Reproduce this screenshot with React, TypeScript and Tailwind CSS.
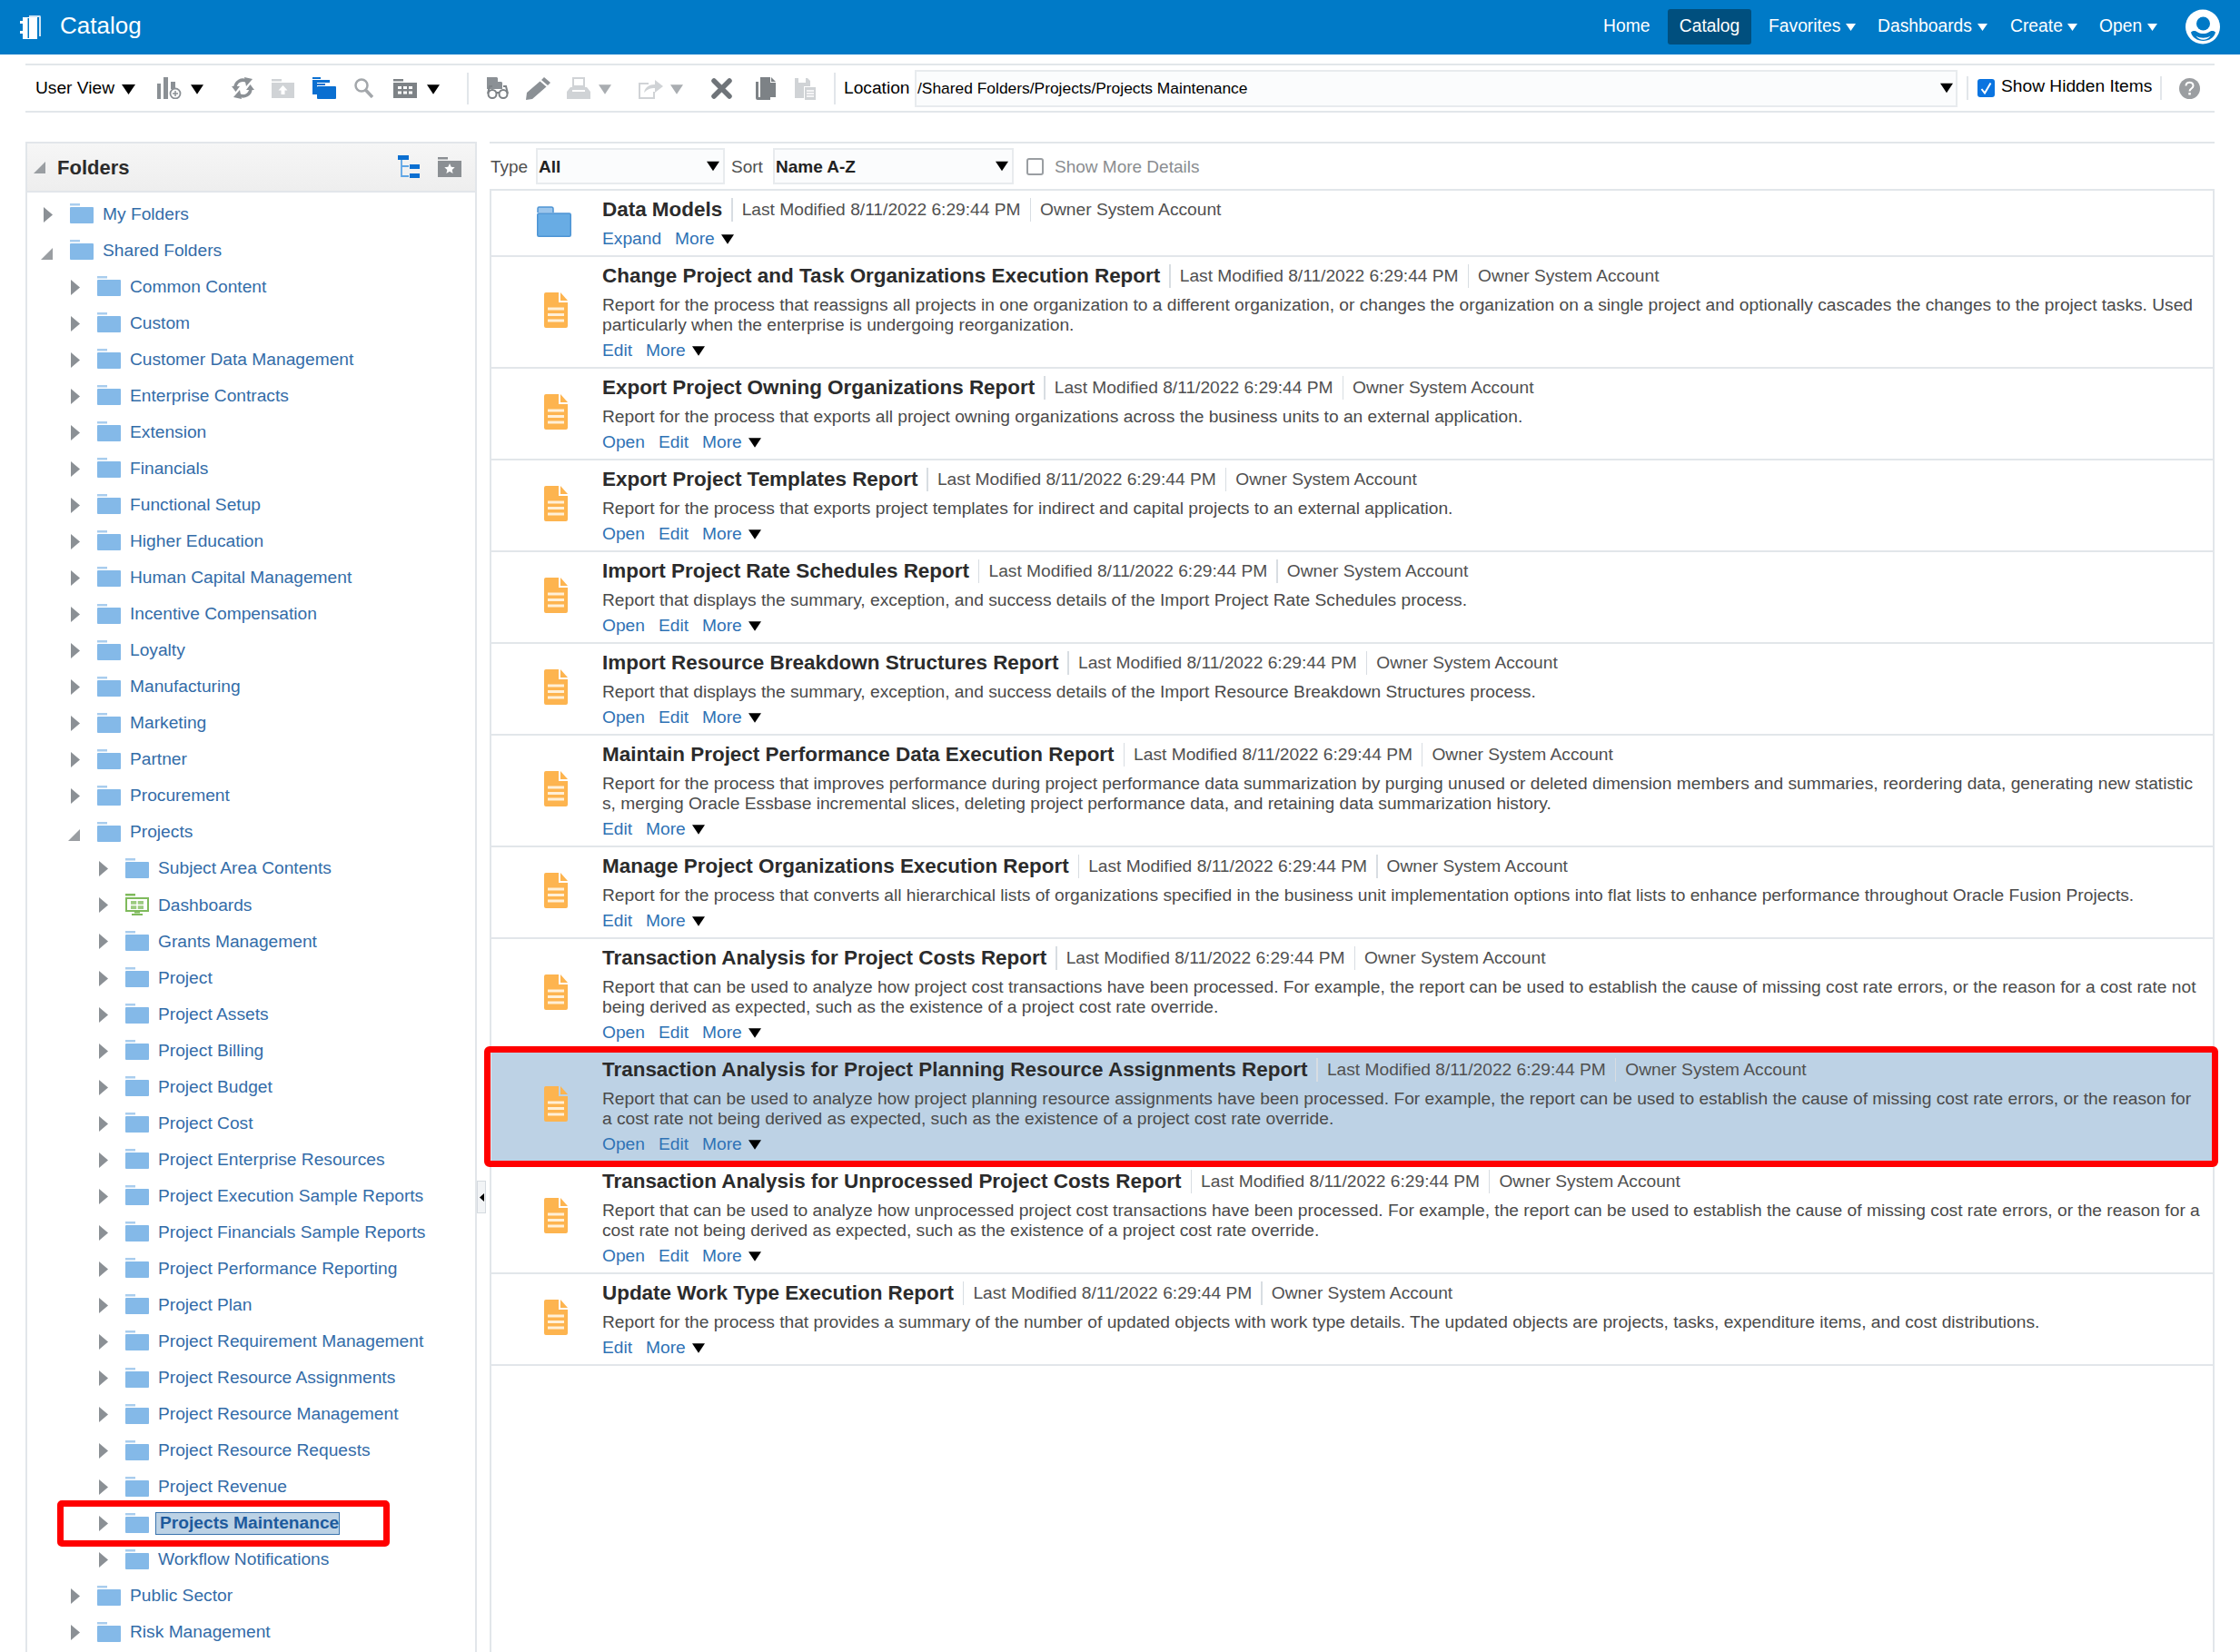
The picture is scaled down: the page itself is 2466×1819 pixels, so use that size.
import { Fragment } from "react";

const G = "#8b9095";
const L = "#d0d3d6";

function Caret({ className = "fill-black", w = 15, h = 11 }: { className?: string; w?: number; h?: number }) {
  return (
    <svg width={w} height={h} viewBox="0 0 15 11" className={`shrink-0 ${className}`}>
      <path d="M0 0h15L7.5 11z" />
    </svg>
  );
}

function TreeFolder() {
  return (
    <svg width="26" height="22" viewBox="0 0 26 22" className="-mt-[2px] shrink-0">
      <rect x="0" y="0" width="11" height="2.5" fill="#a9cdee" />
      <rect x="0" y="4" width="26" height="18" rx="1" fill="#84b9e8" />
    </svg>
  );
}

function DashFolder() {
  return (
    <svg width="26" height="24" viewBox="0 0 26 24" className="-mt-[2px] shrink-0">
      <rect x="0" y="0" width="11" height="2.5" fill="#7fba5c" />
      <path d="M1 5h24v14H1z" fill="none" stroke="#7fba5c" strokeWidth="2" />
      <rect x="6" y="8" width="14" height="9" fill="#9ccb80" />
      <path d="M6 12.5h14M13 8v9" stroke="#fff" strokeWidth="1.5" />
      <rect x="10" y="20" width="6" height="1.5" fill="#7fba5c" />
      <rect x="7" y="22" width="12" height="2" fill="#7fba5c" />
    </svg>
  );
}

function ReportIcon() {
  return (
    <svg width="26" height="39" viewBox="0 0 26 39" className="shrink-0">
      <path d="M0 2a2 2 0 0 1 2-2h14v11h10v26a2 2 0 0 1-2 2H2a2 2 0 0 1-2-2z" fill="#fdb44f" />
      <path d="M18 0l8 9h-8z" fill="#fdb44f" />
      <path d="M4 18h18M4 24.5h18M4 31h18" stroke="#fff0d8" strokeWidth="3" />
    </svg>
  );
}

function ModelFolder() {
  return (
    <svg width="38" height="34" viewBox="0 0 38 34" className="shrink-0">
      <path d="M1 7V2.5A1.5 1.5 0 0 1 2.500 1H16a2 2 0 0 1 2 2v4" fill="#9cc6ec" stroke="#4d94d4" strokeWidth="1.500" />
      <rect x="0.750" y="8" width="36.500" height="25.250" rx="1.500" fill="#68ace4" stroke="#4d94d4" strokeWidth="1.500" />
    </svg>
  );
}

function Sep({ className }: { className: string }) {
  return <div className={`w-[2px] shrink-0 bg-[#e2e6ea] ${className}`} />;
}

function AppIcon() {
  return (
    <svg width="24" height="26" viewBox="0 0 24 26" className="shrink-0">
      <rect x="3" y="2" width="16" height="24" fill="#fff" />
      <path d="M10 0h12a2 2 0 0 1 1 2v21h-2V2H10z" fill="#cfe4f4" />
      <rect x="8.500" y="3" width="1.500" height="22" fill="#0079c6" />
      <path d="M0 6h4v3H0zM0 17h4v3H0z" fill="#fff" />
    </svg>
  );
}

function ChartIcon() {
  return (
    <svg width="27" height="24" viewBox="0 0 27 24" className="shrink-0">
      <rect x="0" y="7" width="4" height="17" fill={G} />
      <rect x="7" y="0" width="5" height="24" fill={G} />
      <rect x="15" y="5" width="5" height="8" fill={G} />
      <circle cx="20" cy="18" r="5.500" fill="none" stroke={G} strokeWidth="1.800" />
      <path d="M20 15v6M17 18h6" stroke={G} strokeWidth="1.500" />
    </svg>
  );
}

function RefreshIcon() {
  return (
    <svg width="25" height="24" viewBox="0 0 25 24" className="shrink-0">
      <path d="M4 12a8.500 8.500 0 0 1 13-7.500" fill="none" stroke={G} strokeWidth="3.500" />
      <path d="M14 0l2 10 7-8zM0 10h9l-4.500 6z" fill={G} />
      <path d="M21 12a8.500 8.500 0 0 1-13 7.500" fill="none" stroke={G} strokeWidth="3.500" />
      <path d="M11 24l-2-10-7 8zM25 14h-9l4.500-6z" fill={G} />
    </svg>
  );
}

function UpFolderIcon() {
  return (
    <svg width="25" height="21" viewBox="0 0 25 21" className="shrink-0">
      <rect x="0" y="0" width="11" height="2.500" fill={L} />
      <rect x="0" y="4" width="25" height="17" fill={L} />
      <path d="M12.500 7l5 5.500h-3V17h-4v-4.500h-3z" fill="#fff" />
    </svg>
  );
}

function CopyFolderIcon() {
  return (
    <svg width="26" height="24" viewBox="0 0 26 24" className="shrink-0">
      <path d="M0 0h9v2H0zM0 3h19v3H5v13H0z" fill="#0a6fd1" />
      <path d="M5 7h9v2H5z" fill="#0a6fd1" />
      <rect x="5" y="10" width="21" height="14" rx="1" fill="#0a6fd1" />
    </svg>
  );
}

function SearchIcon() {
  return (
    <svg width="21" height="22" viewBox="0 0 21 22" className="shrink-0">
      <circle cx="8" cy="8" r="6.500" fill="none" stroke="#a3a7ab" strokeWidth="2.500" />
      <path d="M12.500 13L20 21" stroke="#a3a7ab" strokeWidth="3.500" />
    </svg>
  );
}

function GridFolderIcon() {
  return (
    <svg width="26" height="21" viewBox="0 0 26 21" className="shrink-0">
      <rect x="0" y="0" width="11" height="2.500" fill="#7d8286" />
      <rect x="0" y="4" width="26" height="17" fill="#7d8286" />
      <path d="M5 8h4v3H5zM11 8h4v3h-4zM17 8h4v3h-4zM5 13.500h4v3H5zM11 13.500h4v3h-4zM17 13.500h4v3h-4z" fill="#fff" />
    </svg>
  );
}

function ReportGlassesIcon() {
  return (
    <svg width="24" height="24" viewBox="0 0 24 24" className="shrink-0">
      <path d="M0 0h11l6 6v7H0z" fill="#8b9095" />
      <path d="M12 0l5 5h-5z" fill="#fff" />
      <circle cx="6" cy="18.500" r="4.500" fill="#fff" stroke="#7d8286" strokeWidth="2" />
      <circle cx="18" cy="18.500" r="4.500" fill="#fff" stroke="#7d8286" strokeWidth="2" />
      <path d="M10 17h4M1 18L3 10h3M23 18l-2-8h-3" fill="none" stroke="#7d8286" strokeWidth="2" />
    </svg>
  );
}

function PencilIcon() {
  return (
    <svg width="27" height="25" viewBox="0 0 27 25" className="shrink-0">
      <path d="M20 0l7 6-3 3-7-6zM15.500 4.500l7 6L7 24l-7 1 1-8z" fill={G} />
    </svg>
  );
}

function PrintIcon() {
  return (
    <svg width="26" height="24" viewBox="0 0 26 24" className="shrink-0">
      <path d="M7 1h12v9H7z" fill="none" stroke={L} strokeWidth="2" />
      <path d="M4 11h18l4 5v8H0v-8z" fill={L} />
      <rect x="6" y="14" width="14" height="2" fill="#fff" />
    </svg>
  );
}

function ShareIcon() {
  return (
    <svg width="27" height="24" viewBox="0 0 27 24" className="shrink-0">
      <path d="M11 7H1v16h16v-7" fill="none" stroke={L} strokeWidth="2" />
      <path d="M6 17c1-6 6-9 12-9V3l9 7-9 7v-5c-5 0-8 1-12 5z" fill={L} />
    </svg>
  );
}

function DeleteIcon() {
  return (
    <svg width="23" height="23" viewBox="0 0 23 23" className="shrink-0">
      <path d="M3 3l17 17M20 3L3 20" stroke="#6f7479" strokeWidth="5.500" strokeLinecap="round" />
    </svg>
  );
}

function CopyIcon() {
  return (
    <svg width="22" height="25" viewBox="0 0 22 25" className="shrink-0">
      <path d="M0 5h3v17h13v3H2a2 2 0 0 1-2-2z" fill="#7d8286" />
      <path d="M5 0h11v6h6v16H5z" fill="#7d8286" />
      <path d="M17 0l5 5h-5z" fill="#7d8286" />
    </svg>
  );
}

function PasteIcon() {
  return (
    <svg width="23" height="25" viewBox="0 0 23 25" className="shrink-0">
      <path d="M0 1h14l3 3v6h-7v13H0z" fill={L} />
      <rect x="4" y="1" width="8" height="5" fill="#fff" />
      <rect x="11" y="11" width="12" height="14" fill={L} />
      <path d="M13 15h8M13 18h8M13 21h8" stroke="#fff" strokeWidth="1.500" />
    </svg>
  );
}

function HelpIcon() {
  return (
    <svg width="23" height="23" viewBox="0 0 23 23" className="shrink-0">
      <circle cx="11.500" cy="11.500" r="11.500" fill="#9b9ea1" />
      <path d="M7.500 8.500c0-5 8-5 8 0 0 3-4 3-4 6" fill="none" stroke="#fff" strokeWidth="2" />
      <rect x="10.300" y="16" width="2.500" height="2.500" fill="#fff" />
    </svg>
  );
}

function TreeIcon() {
  return (
    <svg width="24" height="26" viewBox="0 0 24 26" className="shrink-0">
      <path d="M4 3v20h8M4 12h8" fill="none" stroke="#5fa6e6" strokeWidth="1.800" />
      <rect x="0" y="0" width="12" height="5" fill="#0a6fd1" />
      <rect x="13" y="10" width="11" height="5" fill="#0a6fd1" />
      <rect x="13" y="20" width="11" height="5" fill="#0a6fd1" />
    </svg>
  );
}

function FavFolderIcon() {
  return (
    <svg width="26" height="22" viewBox="0 0 26 22" className="shrink-0">
      <rect x="0" y="0" width="11" height="2.500" fill="#8b8f93" />
      <rect x="0" y="4" width="26" height="18" fill="#8b8f93" />
      <path d="M13 7l1.700 3.800 4 .4-3 2.700.9 4L13 15.800 9.400 17.900l.9-4-3-2.700 4-.4z" fill="#fff" />
    </svg>
  );
}

function AvatarIcon() {
  return (
    <svg width="38" height="39" viewBox="0 0 38 39" className="shrink-0">
      <circle cx="19" cy="19.500" r="19" fill="#fff" />
      <circle cx="19.500" cy="16" r="7.500" fill="#0079c6" />
      <path d="M6 25.500c3-2.500 5.500-1.500 7.500 0 3.500 2 8.500 2 12 0 2-1.500 4.500-2.500 7.500 0-1 5.500-7 9.500-13.500 9.500S7 31 6 25.500z" fill="#0079c6" />
      <path d="M11.500 29.500c4.500 3 11.500 3 16 0-2 3-5 4.200-8 4.200s-6-1.200-8-4.200z" fill="#fff" />
    </svg>
  );
}

const nav = [
  { label: "Home", className: "ml-0 w-[51px]" },
  { label: "Catalog", active: true },
  { label: "Favorites", className: "ml-[19px] w-[79px]", caret: true, caretClass: "ml-[6px]" },
  { label: "Dashboards", className: "ml-[24px] w-[104px]", caret: true, caretClass: "ml-[6px]" },
  { label: "Create", className: "ml-[25px] w-[57px]", caret: true, caretClass: "ml-[6px]" },
  { label: "Open", className: "ml-[24px] w-[47px]", caret: true, caretClass: "ml-[6px]" },
];

type Node = { label: string; depth: number; open?: boolean; icon?: "dash"; selected?: boolean };

const tree: Node[] = [
  { label: "My Folders", depth: 0 },
  { label: "Shared Folders", depth: 0, open: true },
  ...[
    "Common Content",
    "Custom",
    "Customer Data Management",
    "Enterprise Contracts",
    "Extension",
    "Financials",
    "Functional Setup",
    "Higher Education",
    "Human Capital Management",
    "Incentive Compensation",
    "Loyalty",
    "Manufacturing",
    "Marketing",
    "Partner",
    "Procurement",
  ].map((label) => ({ label, depth: 1 })),
  { label: "Projects", depth: 1, open: true },
  { label: "Subject Area Contents", depth: 2 },
  { label: "Dashboards", depth: 2, icon: "dash" },
  ...[
    "Grants Management",
    "Project",
    "Project Assets",
    "Project Billing",
    "Project Budget",
    "Project Cost",
    "Project Enterprise Resources",
    "Project Execution Sample Reports",
    "Project Financials Sample Reports",
    "Project Performance Reporting",
    "Project Plan",
    "Project Requirement Management",
    "Project Resource Assignments",
    "Project Resource Management",
    "Project Resource Requests",
    "Project Revenue",
  ].map((label) => ({ label, depth: 2 })),
  { label: "Projects Maintenance", depth: 2, selected: true },
  { label: "Workflow Notifications", depth: 2 },
  { label: "Public Sector", depth: 1 },
  { label: "Risk Management", depth: 1 },
];

const indent = ["pl-[18px]", "pl-[48px]", "pl-[79px]"];

type Item = { title: string; lines: string[]; links: string[]; folder?: boolean; selected?: boolean };

const items: Item[] = [
  { title: "Data Models", lines: [], links: ["Expand", "More"], folder: true },
  {
    title: "Change Project and Task Organizations Execution Report",
    lines: [
      "Report for the process that reassigns all projects in one organization to a different organization, or changes the organization on a single project and optionally cascades the changes to the project tasks. Used",
      "particularly when the enterprise is undergoing reorganization.",
    ],
    links: ["Edit", "More"],
  },
  {
    title: "Export Project Owning Organizations Report",
    lines: ["Report for the process that exports all project owning organizations across the business units to an external application."],
    links: ["Open", "Edit", "More"],
  },
  {
    title: "Export Project Templates Report",
    lines: ["Report for the process that exports project templates for indirect and capital projects to an external application."],
    links: ["Open", "Edit", "More"],
  },
  {
    title: "Import Project Rate Schedules Report",
    lines: ["Report that displays the summary, exception, and success details of the Import Project Rate Schedules process."],
    links: ["Open", "Edit", "More"],
  },
  {
    title: "Import Resource Breakdown Structures Report",
    lines: ["Report that displays the summary, exception, and success details of the Import Resource Breakdown Structures process."],
    links: ["Open", "Edit", "More"],
  },
  {
    title: "Maintain Project Performance Data Execution Report",
    lines: [
      "Report for the process that improves performance during project performance data summarization by purging unused or deleted dimension members and summaries, reordering data, generating new statistic",
      "s, merging Oracle Essbase incremental slices, deleting project performance data, and retaining data summarization history.",
    ],
    links: ["Edit", "More"],
  },
  {
    title: "Manage Project Organizations Execution Report",
    lines: ["Report for the process that converts all hierarchical lists of organizations specified in the business unit implementation options into flat lists to enhance performance throughout Oracle Fusion Projects."],
    links: ["Edit", "More"],
  },
  {
    title: "Transaction Analysis for Project Costs Report",
    lines: [
      "Report that can be used to analyze how project cost transactions have been processed. For example, the report can be used to establish the cause of missing cost rate errors, or the reason for a cost rate not",
      "being derived as expected, such as the existence of a project cost rate override.",
    ],
    links: ["Open", "Edit", "More"],
  },
  {
    title: "Transaction Analysis for Project Planning Resource Assignments Report",
    lines: [
      "Report that can be used to analyze how project planning resource assignments have been processed. For example, the report can be used to establish the cause of missing cost rate errors, or the reason for",
      "a cost rate not being derived as expected, such as the existence of a project cost rate override.",
    ],
    links: ["Open", "Edit", "More"],
    selected: true,
  },
  {
    title: "Transaction Analysis for Unprocessed Project Costs Report",
    lines: [
      "Report that can be used to analyze how unprocessed project cost transactions have been processed. For example, the report can be used to establish the cause of missing cost rate errors, or the reason for a",
      "cost rate not being derived as expected, such as the existence of a project cost rate override.",
    ],
    links: ["Open", "Edit", "More"],
  },
  {
    title: "Update Work Type Execution Report",
    lines: ["Report for the process that provides a summary of the number of updated objects with work type details. The updated objects are projects, tasks, expenditure items, and cost distributions."],
    links: ["Edit", "More"],
  },
];

function Row({ item }: { item: Item }) {
  return (
    <div className={`relative flex border-b-2 border-[#e2e6ea] pt-[6px] pb-[4px] ${item.selected ? "bg-[#bdd2e5]" : ""}`}>
      <div className={`flex w-[122px] shrink-0 items-center justify-center pb-[6px] ${item.folder ? "pl-[16px]" : "pl-[20px]"}`}>
        {item.folder ? <ModelFolder /> : <ReportIcon />}
      </div>
      <div className="min-w-0 flex-1">
        <div className="flex h-[30px] items-center whitespace-nowrap text-[19.200px] text-[#505050]">
          <span className="text-[22.450px] font-bold text-[#2b2b2b]">{item.title}</span>
          <span className="mx-[10px] h-[26px] w-[1.500px] bg-[#d8dde2]" />
          <span>Last Modified 8/11/2022 6:29:44 PM</span>
          <span className="mx-[10px] h-[26px] w-[1.500px] bg-[#d8dde2]" />
          <span>Owner System Account</span>
        </div>
        {item.lines.length > 0 && (
          <div className="mt-[6px] text-[19.200px] leading-[22px] whitespace-nowrap text-[#4a4a4a]">
            {item.lines.map((l) => (
              <div key={l}>{l}</div>
            ))}
          </div>
        )}
        <div className="mt-[3px] flex h-[28px] items-center text-[19.200px] text-[#2f72b5]">
          {item.links.map((l, i) => (
            <Fragment key={l}>
              <span className={i > 0 ? "ml-[15px]" : ""}>{l}</span>
              {l === "More" && <Caret w={14} h={11} className="ml-[7px] fill-black" />}
            </Fragment>
          ))}
        </div>
      </div>
      {item.selected && (
        <div className="pointer-events-none absolute -top-[5px] -right-[6px] -bottom-[7px] -left-[8px] rounded-[6px] border-[7px] border-[#ff0000]" />
      )}
    </div>
  );
}

export default function App() {
  return (
    <div className="h-[1819px] w-[2466px] overflow-hidden bg-white font-['Liberation_Sans',Arial,sans-serif] text-black">
      {/* top bar */}
      <header className="flex h-[60px] items-center bg-[#007ac7] text-white">
        <div className="ml-[22px]">
          <AppIcon />
        </div>
        <span className="-mt-[3px] ml-[20px] text-[26px]">Catalog</span>
        <nav className="-mt-[1px] ml-auto flex items-center text-[19.300px]">
          {nav.map((n) =>
            n.active ? (
              <span key={n.label} className="ml-[20px] flex h-[39px] w-[92px] items-center justify-center rounded-[3px] bg-[#004f7e]">
                {n.label}
              </span>
            ) : (
              <Fragment key={n.label}>
                <span className={`whitespace-nowrap ${n.className}`}>{n.label}</span>
                {n.caret && <Caret w={11} h={10} className={`fill-white ${n.caretClass}`} />}
              </Fragment>
            ),
          )}
          <div className="mr-[22px] ml-[31px]">
            <AvatarIcon />
          </div>
        </nav>
      </header>

      {/* toolbar */}
      <div className="mt-[10px] ml-[28px] flex h-[54px] w-[2410px] items-center border-y-2 border-[#e2e6ea] pl-[11px] text-[19.200px]">
        <span className="w-[87px] whitespace-nowrap">User View</span>
        <Caret className="mt-[3px] ml-[8px] fill-black" />
        <div className="ml-[24px]"><ChartIcon /></div>
        <Caret w={14} h={11} className="mt-[3px] ml-[10px] fill-black" />
        <div className="ml-[31px]"><RefreshIcon /></div>
        <div className="ml-[19px]"><UpFolderIcon /></div>
        <div className="ml-[20px]"><CopyFolderIcon /></div>
        <div className="ml-[20px]"><SearchIcon /></div>
        <div className="ml-[22px]"><GridFolderIcon /></div>
        <Caret w={14} h={11} className="mt-[3px] ml-[11px] fill-black" />
        <Sep className="ml-[30px] h-[35px]" />
        <div className="ml-[20px]"><ReportGlassesIcon /></div>
        <div className="ml-[19px]"><PencilIcon /></div>
        <div className="ml-[18px]"><PrintIcon /></div>
        <Caret w={14} h={11} className="mt-[3px] ml-[9px] fill-[#a9adb1]" />
        <div className="ml-[30px]"><ShareIcon /></div>
        <Caret w={14} h={11} className="mt-[3px] ml-[8px] fill-[#a9adb1]" />
        <div className="ml-[31px]"><DeleteIcon /></div>
        <div className="ml-[26px]"><CopyIcon /></div>
        <div className="ml-[21px]"><PasteIcon /></div>
        <Sep className="ml-[20px] h-[35px]" />
        <span className="mt-[1px] ml-[9px] w-[72px] whitespace-nowrap">Location</span>
        <div className="ml-[6px] flex h-[41px] w-[1148px] items-center border-2 border-[#e8ebee] bg-[#fbfcfd] pr-[3px] pl-[1px] text-[17.400px]">
          <span className="mt-[1px] flex-1 whitespace-nowrap">/Shared Folders/Projects/Projects Maintenance</span>
          <Caret w={14} h={12} className="fill-black" />
        </div>
        <Sep className="ml-[10px] h-[26px]" />
        <span className="ml-[10px] flex h-[20px] w-[19px] shrink-0 items-center justify-center rounded-[3px] bg-[#0a74e0]">
          <svg width="13" height="14" viewBox="0 0 13 14">
            <path d="M1.500 8l3.500 4.500L11.500 1.500" fill="none" stroke="#fff" strokeWidth="2" />
          </svg>
        </span>
        <span className="-mt-[3px] ml-[7px] w-[166px] whitespace-nowrap">Show Hidden Items</span>
        <Sep className="ml-[9px] h-[26px]" />
        <div className="ml-[19px]"><HelpIcon /></div>
      </div>

      {/* body */}
      <div className="mt-[32px] ml-[28px] flex h-[1663px]">
        <aside className="w-[497px] shrink-0 border-x-2 border-t-2 border-[#e2e6ea]">
          <div className="flex h-[54px] items-center border-b-2 border-[#e2e6ea] bg-gradient-to-b from-[#f6f6f6] to-[#eeeeee]">
            <svg width="13" height="13" viewBox="0 0 13 13" className="ml-[7px] shrink-0 fill-[#9a9ea2]">
              <path d="M13 0v13H0z" />
            </svg>
            <span className="ml-[13px] text-[22px] font-bold text-[#2b2b2b]">Folders</span>
            <div className="mr-[15px] ml-auto flex items-center gap-[20px]">
              <TreeIcon />
              <FavFolderIcon />
            </div>
          </div>
          <div className="pt-[4px] text-[19.200px] text-[#336ca8]">
            {tree.map((n) => (
              <div key={n.label + n.depth} className={`relative flex h-[40.050px] items-center whitespace-nowrap ${indent[n.depth]}`}>
                {n.open ? (
                  <svg width="13" height="13" viewBox="0 0 13 13" className="mt-[6px] -ml-[3px] shrink-0 fill-[#9a9ea2]">
                    <path d="M13 0v13H0z" />
                  </svg>
                ) : (
                  <svg width="10" height="17" viewBox="0 0 10 17" className="shrink-0 fill-[#8b9095]">
                    <path d="M0 0l10 8.500L0 17z" />
                  </svg>
                )}
                <div className="ml-[19px]">{n.icon === "dash" ? <DashFolder /> : <TreeFolder />}</div>
                {n.selected ? (
                  <>
                    <span className="ml-[7px] flex h-[25px] w-[203px] items-center border border-[#3a73ad] bg-[#bcd2e5] pl-[4px] font-bold text-[#1d5a9c]">
                      {n.label}
                    </span>
                    <div className="pointer-events-none absolute -top-[6px] left-[33px] h-[51px] w-[366px] rounded-[5px] border-[7px] border-[#ff0000]" />
                  </>
                ) : (
                  <span className="ml-[10px]">{n.label}</span>
                )}
              </div>
            ))}
          </div>
        </aside>

        {/* splitter */}
        <div className="flex w-[14px] shrink-0 flex-col items-start pt-[1144px]">
          <div className="flex h-[36px] w-[10px] items-center justify-center border border-[#d5dae0] bg-[#f2f4f6]">
            <svg width="5" height="9" viewBox="0 0 5 9" className="fill-black">
              <path d="M5 0v9L0 4.500z" />
            </svg>
          </div>
        </div>

        <main className="w-[1899px] shrink-0">
          <div className="flex h-[52px] items-center border-t-2 border-[#e2e6ea] text-[19px] text-[#505050]">
            <span className="mt-[2px] w-[51px] pl-[1px]">Type</span>
            <div className="flex h-[40px] w-[208px] items-center border-2 border-[#e8ebee] bg-[#fbfcfd] pr-[4px] pl-[1px] font-bold text-[#222]">
              <span className="mt-[2px] flex-1">All</span>
              <Caret w={14} h={12} className="fill-black" />
            </div>
            <span className="mt-[2px] ml-[7px] w-[46px]">Sort</span>
            <div className="flex h-[40px] w-[265px] items-center border-2 border-[#e8ebee] bg-[#fbfcfd] pr-[4px] pl-[1px] font-bold text-[#222]">
              <span className="mt-[2px] flex-1">Name A-Z</span>
              <Caret w={14} h={12} className="fill-black" />
            </div>
            <span className="ml-[14px] h-[19px] w-[19px] rounded-[3px] border-2 border-[#9a9ea2] bg-white" />
            <span className="mt-[2px] ml-[12px] text-[#8a8d90]">Show More Details</span>
          </div>
          <div className="h-full border-x-2 border-t-2 border-[#e2e6ea]">
            {items.map((it) => (
              <Row key={it.title} item={it} />
            ))}
          </div>
        </main>
      </div>
    </div>
  );
}
